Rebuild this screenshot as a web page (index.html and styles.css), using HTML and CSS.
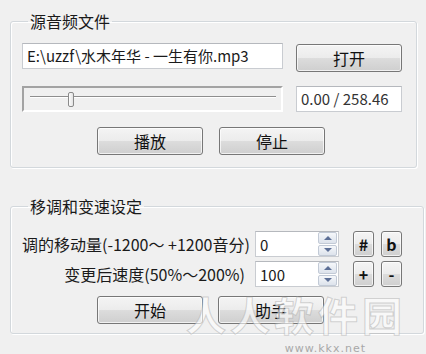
FILE: index.html
```html
<!DOCTYPE html>
<html lang="zh-CN">
<head>
    <meta charset="UTF-8">
    <meta name="viewport" content="width=device-width, initial-scale=1.0">
    <title>移调和变速</title>
    <link rel="stylesheet" href="styles.css">
</head>
<body>
    <div class="window">
        <fieldset class="group group-source">
            <legend>源音频文件</legend>
            <div class="row row-file">
                <div class="field file-path">E:\uzzf\水木年华 - 一生有你.mp3</div>
                <button class="btn btn-wide btn-open">打开</button>
            </div>
            <div class="row row-seek">
                <div class="slider"><span class="thumb"></span></div>
                <div class="field time">0.00 / 258.46</div>
            </div>
            <div class="row row-buttons">
                <button class="btn btn-wide">播放</button>
                <button class="btn btn-wide">停止</button>
            </div>
        </fieldset>

        <fieldset class="group group-pitch">
            <legend>移调和变速设定</legend>
            <div class="row row-setting">
                <label class="setting-label">调的移动量(-1200～ +1200音分)</label>
                <div class="spin">
                    <span class="spin-value">0</span>
                    <span class="spin-arrows"><i class="up"></i><i class="down"></i></span>
                </div>
                <button class="btn btn-small">#</button>
                <button class="btn btn-small">b</button>
            </div>
            <div class="row row-setting row-speed">
                <label class="setting-label">变更后速度(50%～200%)</label>
                <div class="spin">
                    <span class="spin-value">100</span>
                    <span class="spin-arrows"><i class="up"></i><i class="down"></i></span>
                </div>
                <button class="btn btn-small">+</button>
                <button class="btn btn-small">-</button>
            </div>
            <div class="row row-buttons row-start">
                <button class="btn btn-wide">开始</button>
                <button class="btn btn-wide">助手</button>
            </div>
        </fieldset>

        <!-- водяной знак с оригинального скриншота -->
        <div class="watermark">
            <span class="wm-title">人人软件园</span>
            <span class="wm-url">www.kkx.net</span>
        </div>
    </div>
</body>
</html>
```

FILE: styles.css
```css
* {
    margin: 0;
    padding: 0;
    box-sizing: border-box;
}
body {
    background: #f0f0f0;
    color: #1a1a1a;
    font-family: "Noto Sans CJK SC", "Noto Sans", sans-serif;
    font-size: 16px;
    width: 426px;
    height: 354px;
    overflow: hidden;
}
.window {
    position: relative;
    padding: 12px 10px 0 10px;
    height: 354px;
}
.group {
    border: 1px solid #d3d8dc;
    border-radius: 3px;
    box-shadow: inset 1px 1px 0 #fff, 1px 1px 0 #fff;
    padding: 0 14px 0 11px;
}
.group legend {
    margin-left: 6px;
    padding: 0 2px;
    line-height: 18px;
    height: 18px;
}
.group-source {
    padding-bottom: 12px;
}
.group-pitch {
    margin-top: 29px;
    padding-bottom: 9px;
}
.row {
    display: flex;
    align-items: flex-start;
}
.row-file {
    margin-top: 13px;
    gap: 13px;
}
.row-seek {
    margin-top: 14px;
    gap: 13px;
}
.row-buttons {
    margin-top: 15px;
    padding-left: 75px;
    gap: 16px;
}
.field {
    background: #fff;
    border: 1px solid #c9ccd1;
    border-top-color: #b5b8bd;
    height: 26px;
    line-height: 24px;
    padding: 0 4px;
    font-size: 15px;
    white-space: nowrap;
    overflow: hidden;
}
.file-path {
    width: 261px;
}
.time {
    width: 106px;
    color: #333;
}
.btn {
    font-family: inherit;
    font-size: 16px;
    color: #111;
    height: 28px;
    border: 1px solid #777;
    border-radius: 3px;
    background: linear-gradient(#f4f4f4 0%, #ececec 48%, #dcdcdc 52%, #cfcfcf 100%);
    box-shadow: inset 0 0 0 1px rgba(255,255,255,0.7);
    cursor: pointer;
}
.btn-wide {
    width: 106px;
}
.btn-open {
    margin-top: 1px;
}
.slider {
    width: 261px;
    height: 26px;
    border: 2px solid;
    border-color: #a3a3a3 #fff #fff #a3a3a3;
    background:
        linear-gradient(#8e8e8e, #8e8e8e) no-repeat 6px 8px / 246px 1px,
        linear-gradient(#fff, #fff) no-repeat 6px 9px / 246px 1px,
        #f0f0f0;
    display: flex;
    align-items: center;
    padding-left: 44px;
}
.thumb {
    width: 6px;
    height: 15px;
    margin-top: 1px;
    border: 1px solid #8a8a8a;
    border-radius: 2px;
    background: linear-gradient(90deg, #fdfdfd, #e3e3e3);
}
.row-setting {
    margin-top: 16px;
    align-items: center;
}
.row-speed {
    margin-top: 4px;
}
.row-start {
    margin-top: 9px;
    gap: 15px;
}
.setting-label {
    width: 223px;
    text-align: right;
    white-space: nowrap;
    margin-right: 10px;
}
.spin {
    width: 84px;
    height: 26px;
    background: #fff;
    border: 1px solid #c9ccd1;
    border-top-color: #b5b8bd;
    display: flex;
    align-items: center;
    margin-right: 14px;
}
.spin-value {
    flex: 1;
    padding-left: 4px;
    font-size: 15px;
}
.spin-arrows {
    width: 19px;
    height: 24px;
    display: flex;
    flex-direction: column;
    gap: 1px;
    margin-right: 1px;
}
.spin-arrows i {
    flex: 1;
    display: flex;
    align-items: center;
    justify-content: center;
    border: 1px solid #c2cad6;
    border-radius: 2px;
    background: linear-gradient(#f5f7fa, #dde3ec);
}
.spin-arrows i::after {
    content: "";
    border-left: 4px solid transparent;
    border-right: 4px solid transparent;
}
.spin-arrows .up::after {
    border-bottom: 4px solid #5c6f96;
}
.spin-arrows .down::after {
    border-top: 4px solid #5c6f96;
}
.btn-small {
    width: 21px;
    height: 26px;
    margin-right: 7px;
    padding: 0;
    font-size: 16px;
    font-weight: bold;
}
.watermark {
    position: absolute;
    left: 186px;
    top: 294px;
    display: flex;
    flex-direction: column;
    align-items: flex-end;
    pointer-events: none;
}
.wm-title {
    font-size: 40px;
    font-weight: bold;
    line-height: 40px;
    letter-spacing: 4px;
    color: rgba(255, 255, 255, 0.6);
    -webkit-text-stroke: 1px rgba(150, 150, 150, 0.4);
}
.wm-url {
    font-family: "DejaVu Sans", sans-serif;
    font-size: 11px;
    line-height: 12px;
    letter-spacing: 1px;
    color: #a8a8a8;
    margin-right: 40px;
    margin-top: 9px;
}
```
